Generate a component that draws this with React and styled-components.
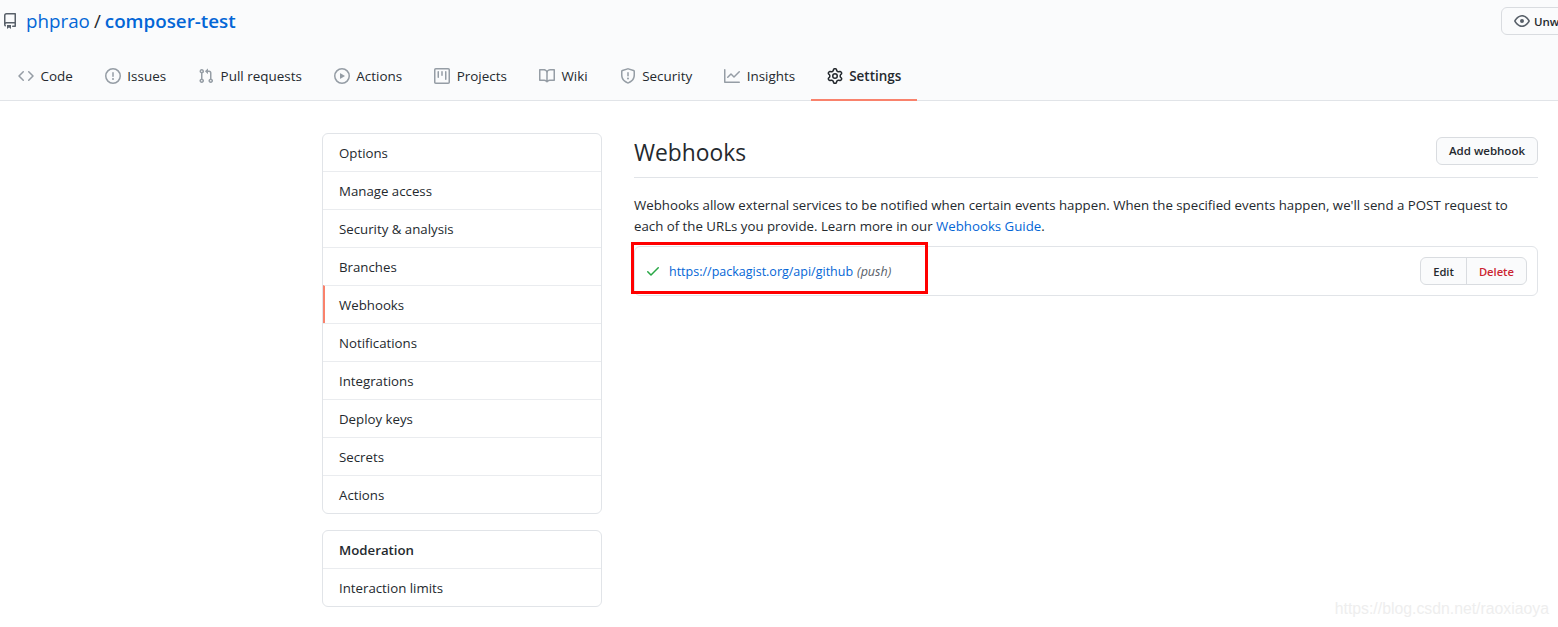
import React from "react";
import styled, { createGlobalStyle } from "styled-components";

const GlobalStyle = createGlobalStyle`
  html, body {
    margin: 0;
    height: 100%;
    overflow: hidden;
    background: #fff;
  }
  body {
    font-family: "Open Sans", "Noto Sans", "Liberation Sans", sans-serif;
    font-size: 13.25px;
    line-height: 21px;
    color: #24292e;
  }
`;

const icons = {
  repo: "M2 2.5A2.5 2.5 0 014.5 0h8.75a.75.75 0 01.75.75v12.5a.75.75 0 01-.75.75h-2.5a.75.75 0 110-1.5h1.75v-2h-8a1 1 0 00-.714 1.7.75.75 0 01-1.072 1.05A2.495 2.495 0 012 11.5v-9zm10.5-1V9h-8c-.356 0-.694.074-1 .208V2.5a1 1 0 011-1h8zM5 12.25v3.25a.25.25 0 00.4.2l1.45-1.087a.25.25 0 01.3 0L8.6 15.7a.25.25 0 00.4-.2v-3.25a.25.25 0 00-.25-.25h-3.5a.25.25 0 00-.25.25z",
  code: "M4.72 3.22a.75.75 0 011.06 1.06L2.06 8l3.72 3.72a.75.75 0 11-1.06 1.06L.47 8.53a.75.75 0 010-1.06l4.25-4.25zm6.56 0a.75.75 0 10-1.06 1.06L13.94 8l-3.72 3.72a.75.75 0 101.06 1.06l4.25-4.25a.75.75 0 000-1.06l-4.25-4.25z",
  issue: "M8 1.5a6.5 6.5 0 100 13 6.5 6.5 0 000-13zM0 8a8 8 0 1116 0A8 8 0 010 8zm9 3a1 1 0 11-2 0 1 1 0 012 0zm-.25-6.25a.75.75 0 00-1.5 0v3.5a.75.75 0 001.5 0v-3.5z",
  pull: "M7.177 3.073L9.573.677A.25.25 0 0110 .854v4.792a.25.25 0 01-.427.177L7.177 3.427a.25.25 0 010-.354zM3.75 2.5a.75.75 0 100 1.5.75.75 0 000-1.5zm-2.25.75a2.25 2.25 0 113 2.122v5.256a2.251 2.251 0 11-1.5 0V5.372A2.25 2.25 0 011.5 3.25zM11 2.5h-1V4h1a1 1 0 011 1v5.628a2.251 2.251 0 101.5 0V5A2.5 2.5 0 0011 2.5zm1 10.25a.75.75 0 111.5 0 .75.75 0 01-1.5 0zM3.75 12a.75.75 0 100 1.5.75.75 0 000-1.5z",
  play: "M1.5 8a6.5 6.5 0 1113 0 6.5 6.5 0 01-13 0zM8 0a8 8 0 100 16A8 8 0 008 0zM6.379 5.227A.25.25 0 006 5.442v5.117a.25.25 0 00.379.214l4.264-2.559a.25.25 0 000-.428L6.379 5.227z",
  project: "M1.75 0A1.75 1.75 0 000 1.75v12.5C0 15.216.784 16 1.75 16h12.5A1.75 1.75 0 0016 14.25V1.75A1.75 1.75 0 0014.25 0H1.75zM1.5 1.75a.25.25 0 01.25-.25h12.5a.25.25 0 01.25.25v12.5a.25.25 0 01-.25.25H1.75a.25.25 0 01-.25-.25V1.75zM11.75 3a.75.75 0 00-.75.75v7.5a.75.75 0 001.5 0v-7.5a.75.75 0 00-.75-.75zm-8.25.75a.75.75 0 011.5 0v5.5a.75.75 0 01-1.5 0v-5.5zM8 3a.75.75 0 00-.75.75v3.5a.75.75 0 001.5 0v-3.5A.75.75 0 008 3z",
  book: "M0 1.75A.75.75 0 01.75 1h4.253c1.227 0 2.317.59 3 1.501A3.744 3.744 0 0111.006 1h4.245a.75.75 0 01.75.75v10.5a.75.75 0 01-.75.75h-4.507a2.25 2.25 0 00-1.591.659l-.622.621a.75.75 0 01-1.06 0l-.622-.621A2.25 2.25 0 005.258 13H.75a.75.75 0 01-.75-.75V1.75zm8.755 3a2.25 2.25 0 012.25-2.25H14.5v9h-3.757c-.71 0-1.4.201-1.992.572l.004-7.322zm-1.504 7.324l.004-5.073-.002-2.253A2.25 2.25 0 005.003 2.5H1.5v9h3.757a3.75 3.75 0 011.994.574z",
  shield: "M7.467.133a1.75 1.75 0 011.066 0l5.25 1.68A1.75 1.75 0 0115 3.48V7c0 1.566-.32 3.182-1.303 4.682-.983 1.498-2.585 2.813-5.032 3.855a1.7 1.7 0 01-1.33 0c-2.447-1.042-4.049-2.357-5.032-3.855C1.32 10.182 1 8.566 1 7V3.48a1.75 1.75 0 011.217-1.667l5.25-1.68zm.61 1.429a.25.25 0 00-.153 0l-5.25 1.68a.25.25 0 00-.174.238V7c0 1.358.275 2.666 1.057 3.86.784 1.194 2.121 2.34 4.366 3.297a.2.2 0 00.154 0c2.245-.956 3.582-2.104 4.366-3.298C13.225 9.666 13.5 8.36 13.5 7V3.48a.25.25 0 00-.174-.237l-5.25-1.68zM9 10.5a1 1 0 11-2 0 1 1 0 012 0zm-.25-5.75a.75.75 0 10-1.5 0v3a.75.75 0 001.5 0v-3z",
  graph: "M1.5 1.75a.75.75 0 00-1.5 0v12.5c0 .414.336.75.75.75h14.5a.75.75 0 000-1.5H1.5V1.75zm14.28 2.53a.75.75 0 00-1.06-1.06L10 7.94 7.53 5.47a.75.75 0 00-1.06 0L3.22 8.72a.75.75 0 001.06 1.06L7 7.06l2.47 2.47a.75.75 0 001.06 0l5.25-5.25z",
  gear: "M7.429 1.525a6.593 6.593 0 011.142 0c.036.003.108.036.137.146l.289 1.105c.147.56.55.967.997 1.189.174.086.341.183.501.29.417.278.97.423 1.53.27l1.102-.303c.11-.03.175.016.195.046.219.31.41.641.573.989.014.031.022.11-.059.19l-.815.806c-.411.406-.562.957-.53 1.456a4.588 4.588 0 010 .582c-.032.499.119 1.05.53 1.456l.815.806c.08.08.073.159.059.19a6.494 6.494 0 01-.573.99c-.02.029-.086.074-.195.045l-1.103-.303c-.559-.153-1.112-.008-1.529.27-.16.107-.327.204-.5.29-.449.222-.851.628-.998 1.189l-.289 1.105c-.029.11-.101.143-.137.146a6.613 6.613 0 01-1.142 0c-.036-.003-.108-.037-.137-.146l-.289-1.105c-.147-.56-.55-.967-.997-1.189a4.502 4.502 0 01-.501-.29c-.417-.278-.97-.423-1.53-.27l-1.102.303c-.11.03-.175-.016-.195-.046a6.492 6.492 0 01-.573-.989c-.014-.031-.022-.11.059-.19l.815-.806c.411-.406.562-.957.53-1.456a4.587 4.587 0 010-.582c.032-.499-.119-1.05-.53-1.456l-.815-.806c-.08-.08-.073-.159-.059-.19a6.44 6.44 0 01.573-.99c.02-.029.086-.075.195-.045l1.103.303c.559.153 1.112.008 1.529-.27.16-.107.327-.204.5-.29.449-.222.851-.628.998-1.189l.289-1.105c.029-.11.101-.143.137-.146zM8 0c-.236 0-.47.01-.701.03-.743.065-1.29.615-1.458 1.261l-.29 1.106c-.017.066-.078.158-.211.224a5.994 5.994 0 00-.668.386c-.123.082-.233.09-.3.071L3.27 2.776c-.644-.177-1.392.02-1.82.63a7.977 7.977 0 00-.704 1.217c-.315.675-.111 1.422.363 1.891l.815.806c.05.048.098.147.088.294a6.084 6.084 0 000 .772c.01.147-.038.246-.088.294l-.815.806c-.474.469-.678 1.216-.363 1.891.2.428.436.835.704 1.218.428.609 1.176.806 1.82.63l1.103-.303c.066-.019.176-.011.299.071.213.143.436.272.668.386.133.066.194.158.212.224l.289 1.106c.169.646.715 1.196 1.458 1.26a8.094 8.094 0 001.402 0c.743-.064 1.29-.614 1.458-1.26l.29-1.106c.017-.066.078-.158.211-.224a5.98 5.98 0 00.668-.386c.123-.082.233-.09.3-.071l1.102.302c.644.177 1.392-.02 1.82-.63.268-.382.505-.789.704-1.217.315-.675.111-1.422-.364-1.891l-.814-.806c-.05-.048-.098-.147-.088-.294a6.1 6.1 0 000-.772c-.01-.147.039-.246.088-.294l.814-.806c.475-.469.679-1.216.364-1.891a7.992 7.992 0 00-.704-1.218c-.428-.609-1.176-.806-1.82-.63l-1.103.303c-.066.019-.176.011-.299-.071a5.991 5.991 0 00-.668-.386c-.133-.066-.194-.158-.212-.224L10.16 1.29C9.99.645 9.444.095 8.701.031A8.094 8.094 0 008 0zm1.5 8a1.5 1.5 0 11-3 0 1.5 1.5 0 013 0zM11 8a3 3 0 11-6 0 3 3 0 016 0z",
  eye: "M1.679 7.932c.412-.621 1.242-1.75 2.366-2.717C5.175 4.242 6.527 3.5 8 3.5c1.473 0 2.824.742 3.955 1.715 1.124.967 1.954 2.096 2.366 2.717a.119.119 0 010 .136c-.412.621-1.242 1.75-2.366 2.717C10.825 11.758 9.473 12.5 8 12.5c-1.473 0-2.824-.742-3.955-1.715C2.92 9.818 2.09 8.69 1.679 8.068a.119.119 0 010-.136zM8 2c-1.981 0-3.67.992-4.933 2.078C1.797 5.169.88 6.423.43 7.1a1.619 1.619 0 000 1.798c.45.678 1.367 1.932 2.637 3.024C4.329 13.008 6.019 14 8 14c1.981 0 3.67-.992 4.933-2.078 1.27-1.091 2.187-2.345 2.637-3.023a1.619 1.619 0 000-1.798c-.45-.678-1.367-1.932-2.637-3.023C11.671 2.992 9.981 2 8 2zm0 8a2 2 0 100-4 2 2 0 000 4z",
  check: "M13.78 4.22a.75.75 0 010 1.06l-7.25 7.25a.75.75 0 01-1.06 0L2.22 9.28a.75.75 0 011.06-1.06L6 10.94l6.72-6.72a.75.75 0 011.06 0z",
};

const Svg = styled.svg`
  flex: none;
  display: block;
  fill: ${(p) => p.$color || "#959da5"};
`;

const Icon = ({ name, color }) => (
  <Svg width="16" height="16" viewBox="0 0 16 16" $color={color}>
    <path fillRule="evenodd" d={icons[name]} />
  </Svg>
);

const Page = styled.div`
  position: relative;
  width: 1558px;
  height: 627px;
  overflow: hidden;
`;

const Header = styled.header`
  height: 100px;
  background: #fafbfc;
  border-bottom: 1px solid #e1e4e8;
  display: flex;
  flex-direction: column;
`;

const TopRow = styled.div`
  height: 43px;
  padding: 7px 0 0 2px;
  display: flex;
  justify-content: space-between;
  align-items: flex-start;
  box-sizing: border-box;
`;

const RepoTitle = styled.div`
  display: flex;
  align-items: center;
  height: 28px;
  font-size: 18.8px;
  line-height: 28px;
  color: #24292e;
`;

const RepoLink = styled.a`
  color: #0366d6;
  font-weight: ${(p) => (p.$strong ? 600 : 400)};
  margin-left: ${(p) => (p.$strong ? "0" : "8px")};
`;

const Slash = styled.span`
  margin: 0 4px;
`;

const WatchButton = styled.div`
  display: flex;
  align-items: center;
  gap: 4px;
  width: 70px;
  height: 28px;
  margin-right: -13px;
  padding-left: 12px;
  box-sizing: border-box;
  border: 1px solid #d9dce0;
  border-radius: 6px;
  background: #fafbfc;
  font-size: 11.5px;
  font-weight: 600;
  white-space: nowrap;
  overflow: hidden;
`;

const Tabs = styled.nav`
  flex: 1;
  display: flex;
  padding-left: 2px;
`;

const Tab = styled.a`
  display: flex;
  align-items: center;
  gap: ${(p) => (p.$active ? "6px" : "6.5px")};
  height: 58px;
  margin-bottom: -1px;
  padding: 10px 16px 0;
  box-sizing: border-box;
  border-bottom: 2px solid ${(p) => (p.$active ? "#f9826c" : "transparent")};
  font-size: 13.45px;
  font-weight: ${(p) => (p.$active ? 600 : 400)};
  color: #24292e;
`;

const Content = styled.main`
  display: flex;
  gap: 32px;
  padding: 32px 20px 0 322px;
`;

const Side = styled.aside`
  flex: none;
  width: 280px;
  display: flex;
  flex-direction: column;
  gap: 16px;
`;

const Menu = styled.div`
  border: 1px solid #e1e4e8;
  border-radius: 6px;
  overflow: hidden;
`;

const MenuItem = styled.a`
  display: flex;
  align-items: center;
  box-sizing: border-box;
  padding-top: 2px;
  font-weight: ${(p) => (p.$heading ? 600 : 400)};
  border-left: ${(p) => (p.$active ? "2px solid #f9826c" : "none")};
  padding-left: ${(p) => (p.$active ? "14px" : "16px")};
  border-top: ${(p) => (p.$first ? "none" : "1px solid #eaecef")};
  height: ${(p) => (p.$first ? "37px" : "38px")};
`;

const Main = styled.section`
  flex: 1;
  min-width: 0;
`;

const TitleBar = styled.div`
  display: flex;
  justify-content: space-between;
  align-items: flex-start;
  height: 45px;
  padding-top: 4px;
  box-sizing: border-box;
  border-bottom: 1px solid #e1e4e8;
  margin-bottom: 17px;
`;

const Title = styled.h2`
  margin: 0;
  font-size: 22.8px;
  line-height: 32px;
  font-weight: 400;
`;

const Button = styled.button`
  height: 28px;
  padding: 0 12px;
  border: 1px solid #d9dce0;
  border-radius: 6px;
  background: #fafbfc;
  font: 600 11.5px/20px "Open Sans", "Noto Sans", sans-serif;
  color: #24292e;
`;

const Intro = styled.p`
  margin: 0 0 9px;
  height: 42px;
`;

const Link = styled.a`
  color: #0366d6;
`;

const HookRow = styled.div`
  display: flex;
  align-items: center;
  justify-content: space-between;
  height: 50px;
  padding: 0 10px;
  box-sizing: border-box;
  border: 1px solid #e1e4e8;
  border-radius: 6px;
`;

const HookInfo = styled.div`
  display: flex;
  align-items: center;
  font-size: 12.5px;
  gap: 4px;
`;

const HookUrl = styled(Link)`
  margin-left: 4px;
`;

const HookEvent = styled.em`
  color: #586069;
`;

const ButtonGroup = styled.div`
  display: flex;
  height: 28px;
  border: 1px solid #d9dce0;
  border-radius: 6px;
  background: #fafbfc;
  box-sizing: border-box;
  overflow: hidden;
`;

const GroupButton = styled.a`
  display: flex;
  align-items: center;
  padding: 0 12px;
  font-size: 11.2px;
  font-weight: 600;
  color: ${(p) => (p.$danger ? "#cb2431" : "#24292e")};
  border-left: ${(p) => (p.$danger ? "1px solid #d9dce0" : "none")};
`;

const Highlight = styled.div`
  position: absolute;
  left: 631px;
  top: 242px;
  width: 297px;
  height: 52px;
  box-sizing: border-box;
  border: 3px solid #ff0000;
`;

const Watermark = styled.div`
  position: absolute;
  right: 9px;
  bottom: 8px;
  font: 15.8px/20px "Liberation Sans", Arial, sans-serif;
  color: #eeeeee;
`;

const tabs = [
  ["code", "Code"],
  ["issue", "Issues"],
  ["pull", "Pull requests"],
  ["play", "Actions"],
  ["project", "Projects"],
  ["book", "Wiki"],
  ["shield", "Security"],
  ["graph", "Insights"],
];

const menu = [
  "Options",
  "Manage access",
  "Security & analysis",
  "Branches",
  "Webhooks",
  "Notifications",
  "Integrations",
  "Deploy keys",
  "Secrets",
  "Actions",
];

const App = () => {
  return (
    <Page>
      <GlobalStyle />
      <Header>
        <TopRow>
          <RepoTitle>
            <Icon name="repo" color="#586069" />
            <RepoLink>phprao</RepoLink>
            <Slash>/</Slash>
            <RepoLink $strong>composer-test</RepoLink>
          </RepoTitle>
          <WatchButton>
            <Icon name="eye" color="#586069" />
            Unwatch
          </WatchButton>
        </TopRow>
        <Tabs>
          {tabs.map(([icon, label]) => (
            <Tab key={label}>
              <Icon name={icon} />
              {label}
            </Tab>
          ))}
          <Tab $active>
            <Icon name="gear" color="#24292e" />
            Settings
          </Tab>
        </Tabs>
      </Header>
      <Content>
        <Side>
          <Menu>
            {menu.map((item, i) => (
              <MenuItem key={item} $first={i === 0} $active={item === "Webhooks"}>
                {item}
              </MenuItem>
            ))}
          </Menu>
          <Menu>
            <MenuItem $first $heading>
              Moderation
            </MenuItem>
            <MenuItem>Interaction limits</MenuItem>
          </Menu>
        </Side>
        <Main>
          <TitleBar>
            <Title>Webhooks</Title>
            <Button>Add webhook</Button>
          </TitleBar>
          <Intro>
            Webhooks allow external services to be notified when certain events
            happen. When the specified events happen, we'll send a POST request
            to each of the URLs you provide. Learn more in our{" "}
            <Link>Webhooks Guide</Link>.
          </Intro>
          <HookRow>
            <HookInfo>
              <Icon name="check" color="#28a745" />
              <HookUrl>https://packagist.org/api/github</HookUrl>
              <HookEvent>(push)</HookEvent>
            </HookInfo>
            <ButtonGroup>
              <GroupButton>Edit</GroupButton>
              <GroupButton $danger>Delete</GroupButton>
            </ButtonGroup>
          </HookRow>
        </Main>
      </Content>
      <Highlight />
      <Watermark>https://blog.csdn.net/raoxiaoya</Watermark>
    </Page>
  );
};

export default App;
